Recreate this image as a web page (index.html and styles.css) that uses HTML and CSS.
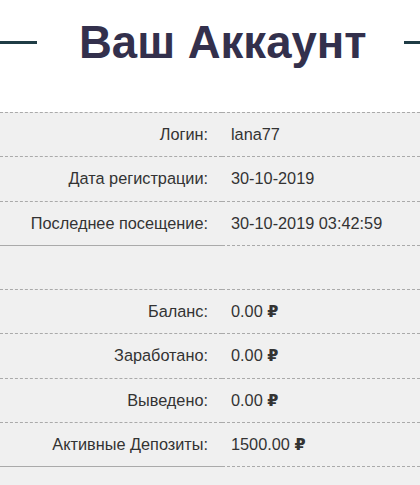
FILE: index.html
```html
<!DOCTYPE html>
<html lang="ru">
<head>
<meta charset="utf-8">
<title>Ваш Аккаунт</title>
<link rel="stylesheet" href="styles.css">
</head>
<body>
<header class="head">
  <span class="line line-left"></span>
  <h1 class="title">Ваш Аккаунт</h1>
  <span class="line line-right"></span>
</header>
<main class="panel">
  <table class="account">
    <tr><td class="lbl">Логин:</td><td class="val">lana77</td></tr>
    <tr><td class="lbl">Дата регистрации:</td><td class="val">30-10-2019</td></tr>
    <tr class="group-end"><td class="lbl">Последнее посещение:</td><td class="val">30-10-2019 03:42:59</td></tr>
    <tr class="spacer"><td class="lbl"></td><td class="val"></td></tr>
    <tr><td class="lbl">Баланс:</td><td class="val">0.00 <span class="rub">₽</span></td></tr>
    <tr><td class="lbl">Заработано:</td><td class="val">0.00 <span class="rub">₽</span></td></tr>
    <tr><td class="lbl">Выведено:</td><td class="val">0.00 <span class="rub">₽</span></td></tr>
    <tr class="group-end"><td class="lbl">Активные Депозиты:</td><td class="val">1500.00 <span class="rub">₽</span></td></tr>
  </table>
</main>
</body>
</html>
```
FILE: styles.css
```css
html, body {
  margin: 0;
  padding: 0;
  background: #ffffff;
  font-family: "Liberation Sans", Arial, sans-serif;
}
.head {
  display: flex;
  align-items: center;
  height: 112px;
  padding-bottom: 27px;
  box-sizing: border-box;
  background: #ffffff;
}
.line {
  display: block;
  height: 3px;
  background: #1f3c45;
  flex: none;
}
.line-left {
  width: 37px;
  margin-right: 42px;
}
.line-right {
  width: 16px;
  margin-left: auto;
}
.title {
  margin: 0;
  font-size: 45.5px;
  font-weight: 700;
  color: #33304c;
  line-height: 1;
  white-space: nowrap;
}
.panel {
  background: #f0f0f0;
  min-height: 373px;
}
.account {
  width: 100%;
  border-collapse: collapse;
  font-size: 16.3px;
  color: #333333;
}
.account td {
  height: 43.25px;
  padding: 0;
  border-top: 1px dashed #aaaaaa;
  border-bottom: 1px dashed #aaaaaa;
  vertical-align: middle;
}
.account .lbl {
  width: 208px;
  padding-right: 14px;
  text-align: right;
}
.account .val {
  padding-left: 9px;
  text-align: left;
}
.account .group-end .lbl {
  border-bottom: 1px solid #aaaaaa;
}
.rub {
  font-family: "DejaVu Sans", sans-serif;
  font-weight: 700;
  font-size: 16px;
}
```
